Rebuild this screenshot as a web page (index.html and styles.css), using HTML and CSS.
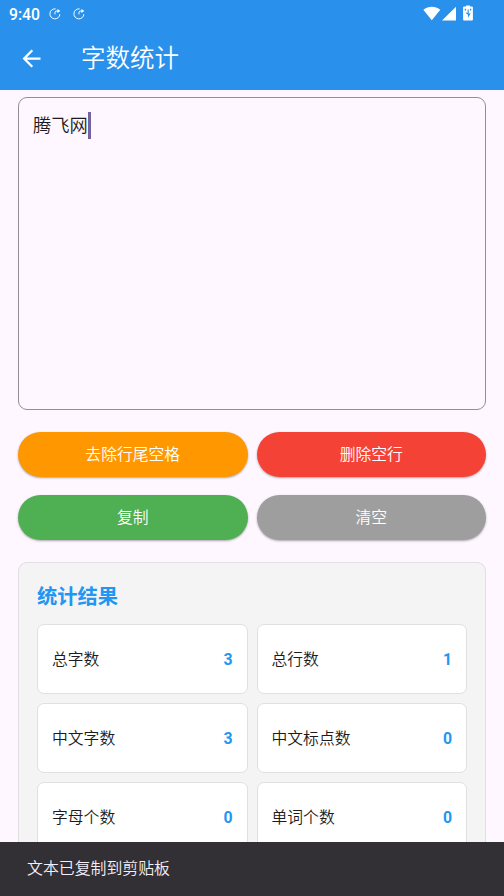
FILE: index.html
```html
<!DOCTYPE html>
<html lang="zh-CN">
<head>
<meta charset="utf-8">
<title>字数统计</title>
<link rel="stylesheet" href="styles.css">
</head>
<body>
<div class="app">
  <header class="header">
    <div class="status">
      <span class="time">9:40</span>
      <svg class="notice" viewBox="0 0 12 12"><path d="M6.6.9A5 5 0 1 0 10.9 6.2M6 6.3V4.3Q6 3.1 7.2 3.1H9"/><path class="solid" d="M8.4 1 11.4 2.9 8.4 4.9z"/></svg>
      <svg class="notice" viewBox="0 0 12 12"><path d="M6.6.9A5 5 0 1 0 10.9 6.2M6 6.3V4.3Q6 3.1 7.2 3.1H9"/><path class="solid" d="M8.4 1 11.4 2.9 8.4 4.9z"/></svg>
      <svg class="system" viewBox="0 0 52 18"><path d="M.3 4.8C5.5.6 12.2.6 17.3 4.8L8.8 15.2zM33 1.8V15.5H19z"/><path fill-rule="evenodd" d="M41 1.6h2.1V.5h3.8v1.1H49a.9.9 0 0 1 .9.9v12.1a.9.9 0 0 1-.9.9h-8a.9.9 0 0 1-.9-.9V2.5a.9.9 0 0 1 .9-.9zM41.7 3.8v1.8h1.4V3.8zm5.2 0v1.8h1.4V3.8zM44.6 4.6v3.2h-2.3L45 9.7v3.1l2.7-4.2h-2V4.6z"/></svg>
    </div>
    <div class="toolbar">
      <svg class="back" viewBox="0 0 24 24"><path d="M20 11H7.83l5.59-5.59L12 4l-8 8 8 8 1.41-1.41L7.83 13H20v-2z"/></svg>
      <h1 class="title">字数统计</h1>
    </div>
  </header>
  <main class="content">
    <div class="editor"><span>腾飞网</span><i class="caret"></i></div>
    <div class="actions">
      <button class="btn orange">去除行尾空格</button>
      <button class="btn red">删除空行</button>
      <button class="btn green">复制</button>
      <button class="btn gray">清空</button>
    </div>
    <section class="panel">
      <h2 class="heading">统计结果</h2>
      <div class="stats">
        <div class="stat"><span>总字数</span><b>3</b></div>
        <div class="stat"><span>总行数</span><b>1</b></div>
        <div class="stat"><span>中文字数</span><b>3</b></div>
        <div class="stat"><span>中文标点数</span><b>0</b></div>
        <div class="stat"><span>字母个数</span><b>0</b></div>
        <div class="stat"><span>单词个数</span><b>0</b></div>
      </div>
    </section>
  </main>
  <footer class="snackbar">文本已复制到剪贴板</footer>
</div>
</body>
</html>
```
FILE: styles.css
```css
* { box-sizing: border-box; }
body { margin: 0; font-family: Roboto, "Noto Sans CJK SC", sans-serif; font-weight: 350; }
.app { width: 504px; height: 896px; display: flex; flex-direction: column; overflow: hidden; background: #fef7ff; color: #1d1b20; }
.header { flex: none; height: 89.5px; background: #2991ec; color: #fff; }
.status { height: 27px; display: flex; align-items: center; padding: 0 31px 0 9px; }
.time { font-size: 15.75px; font-weight: 500; line-height: 27px; width: 39.5px; padding-top: 1px; }
.notice { width: 12px; height: 12px; margin-right: 12.5px; fill: none; stroke: #fff; stroke-width: 1; }
.notice .solid { fill: #fff; stroke: none; }
.system { width: 52px; height: 18px; margin: 0 -2px 0 auto; fill: #fff; }
.toolbar { height: 62px; display: flex; align-items: center; padding-left: 18px; }
.back { width: 27px; height: 27px; fill: #fff; }
.title { margin: 0 0 0 36px; padding-top: 1px; font-size: 24.5px; font-weight: 350; line-height: 37px; }
.content { flex: 1; min-height: 0; overflow: hidden; padding: 7px 18px 0; }
.editor { height: 313.5px; border: 1px solid #938f96; border-radius: 9px; padding: 14.5px 14px; display: flex; font-size: 18.3px; line-height: 27px; }
.caret { width: 3px; height: 27px; background: #7562a1; }
.actions { margin-top: 22px; display: grid; grid-template-columns: 1fr 1fr; gap: 18px 9px; }
.btn { height: 45px; border: 0; border-radius: 23px; padding: 0; color: #fff; font: 350 15.8px/24px Roboto, "Noto Sans CJK SC", sans-serif; box-shadow: 0 1px 2px rgba(0,0,0,.25), 0 1px 3px rgba(0,0,0,.1); }
.orange { background: #ff9800; }
.red { background: #f44336; }
.green { background: #4faf53; }
.gray { background: #9e9e9e; }
.panel { margin-top: 22px; height: 400px; border: 1px solid #e0e0e0; border-radius: 9px; background: #f4f4f4; padding: 18px; }
.heading { margin: 0; padding-top: 1px; color: #2196f3; font-size: 20.25px; font-weight: 700; line-height: 31px; }
.stats { margin-top: 11px; display: grid; grid-template-columns: 1fr 1fr; grid-auto-rows: 70px; gap: 9.2px 9px; }
.stat { border: 1px solid #e0e0e0; border-radius: 7px; background: #fff; padding: 0 14px; display: flex; align-items: center; justify-content: space-between; font-size: 15.8px; line-height: 24px; }
.stat span { padding-top: 1.5px; }
.stat b { color: #2196f3; font-weight: 700; padding-top: 2px; }
.snackbar { flex: none; height: 54px; background: #322f35; color: #f5eff7; padding-left: 27px; font-size: 15.9px; line-height: 54px; }
```
